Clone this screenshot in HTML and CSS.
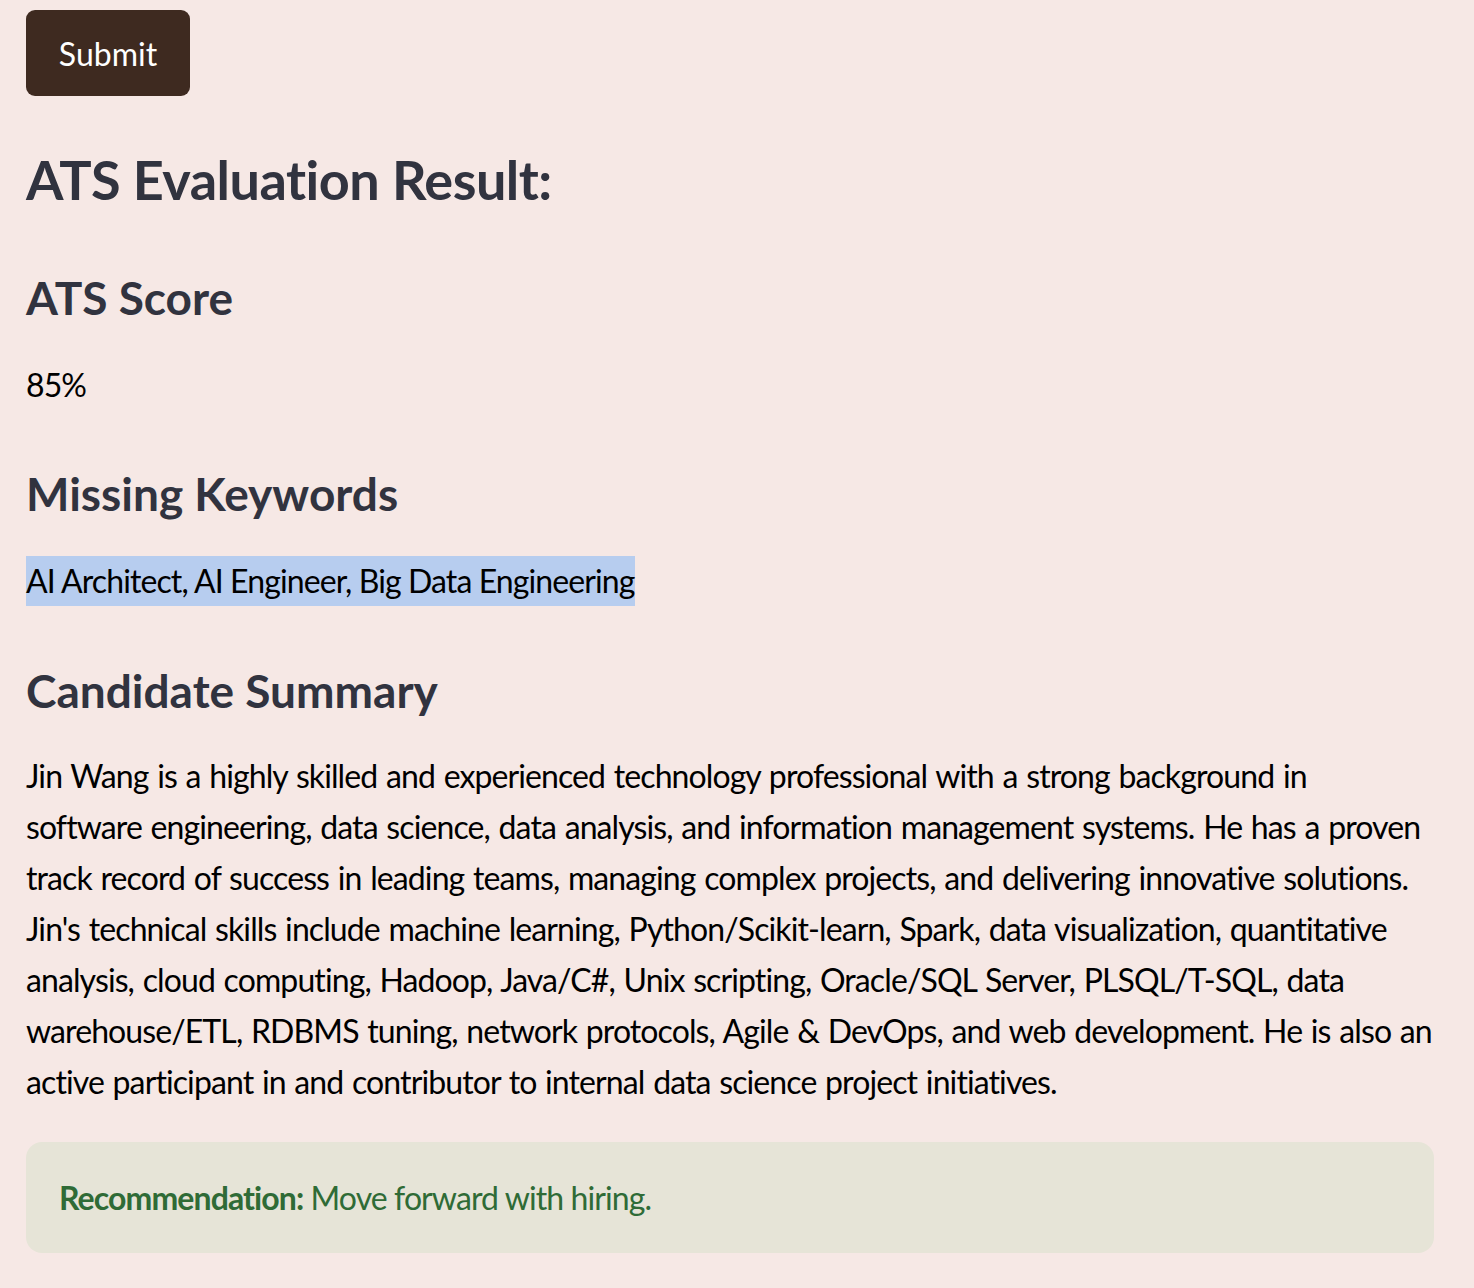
FILE: index.html
```html
<!DOCTYPE html>
<html lang="en">
<head>
<meta charset="utf-8">
<title>ATS Evaluation</title>
<link rel="stylesheet" href="styles.css">
</head>
<body>
<main class="app">
  <button class="submit-btn" type="button">Submit</button>
  <h1 class="title">ATS Evaluation Result:</h1>
  <h3 class="section section-first">ATS Score</h3>
  <p class="text score">85%</p>
  <h3 class="section">Missing Keywords</h3>
  <p class="text keywords"><mark class="hl">AI Architect, AI Engineer, Big Data Engineering</mark></p>
  <h3 class="section">Candidate Summary</h3>
  <p class="text summary">Jin Wang is a highly skilled and experienced technology professional with a strong background in<br>software engineering, data science, data analysis, and information management systems. He has a proven track record of success in leading teams, managing complex projects, and delivering innovative solutions. Jin's technical skills include machine learning, Python/Scikit-learn, Spark, data visualization, quantitative analysis, cloud computing, Hadoop, Java/C#, Unix scripting, Oracle/SQL Server, PLSQL/T-SQL, data warehouse/ETL, RDBMS tuning, network protocols, Agile &amp; DevOps, and web development. He is also an active participant in and contributor to internal data science project initiatives.</p>
  <div class="rec-box"><strong>Recommendation:</strong> Move forward with hiring.</div>
</main>
</body>
</html>
```
FILE: styles.css
```css
html, body {
  margin: 0;
  padding: 0;
  background: #f6e8e5;
}
body {
  font-family: "Lato", "Noto Sans", sans-serif;
  color: #000;
}
.app {
  padding: 10px 40px 34px 26px;
  display: flex;
  flex-direction: column;
  align-items: flex-start;
}
.submit-btn {
  width: 164px;
  height: 86px;
  background: #3e2a20;
  color: #fff;
  border: none;
  border-radius: 9px;
  font-family: inherit;
  font-size: 32px;
  padding: 0;
  cursor: pointer;
}
.title {
  margin: 50px 0 0 0;
  font-size: 54px;
  line-height: 68px;
  font-weight: 700;
  color: #31333f;
  letter-spacing: -0.5px;
}
.section {
  margin: 57px 0 0 0;
  font-size: 46px;
  line-height: 54px;
  font-weight: 700;
  color: #31333f;
  letter-spacing: 0;
}
.text {
  margin: 0;
  font-size: 32px;
  line-height: 51px;
  letter-spacing: -0.9px;
}
.score {
  margin-top: 34px;
}
.keywords {
  margin-top: 34px;
}
.keywords + .section {
  margin-top: 58px;
}
.hl {
  background: #b7cdef;
  color: #000;
  padding: 0;
  display: inline-block;
  line-height: 50px;
}
.summary {
  margin-top: 32px;
  width: 1408px;
  word-spacing: 1.4px;
}
.rec-box {
  margin-top: 35px;
  box-sizing: border-box;
  width: 1408px;
  height: 111px;
  padding: 31px 33px;
  background: #e6e4d7;
  border-radius: 16px;
  color: #2f6b36;
  font-size: 32px;
  line-height: 49px;
  letter-spacing: -0.9px;
}
.rec-box strong {
  font-weight: 700;
}
```
